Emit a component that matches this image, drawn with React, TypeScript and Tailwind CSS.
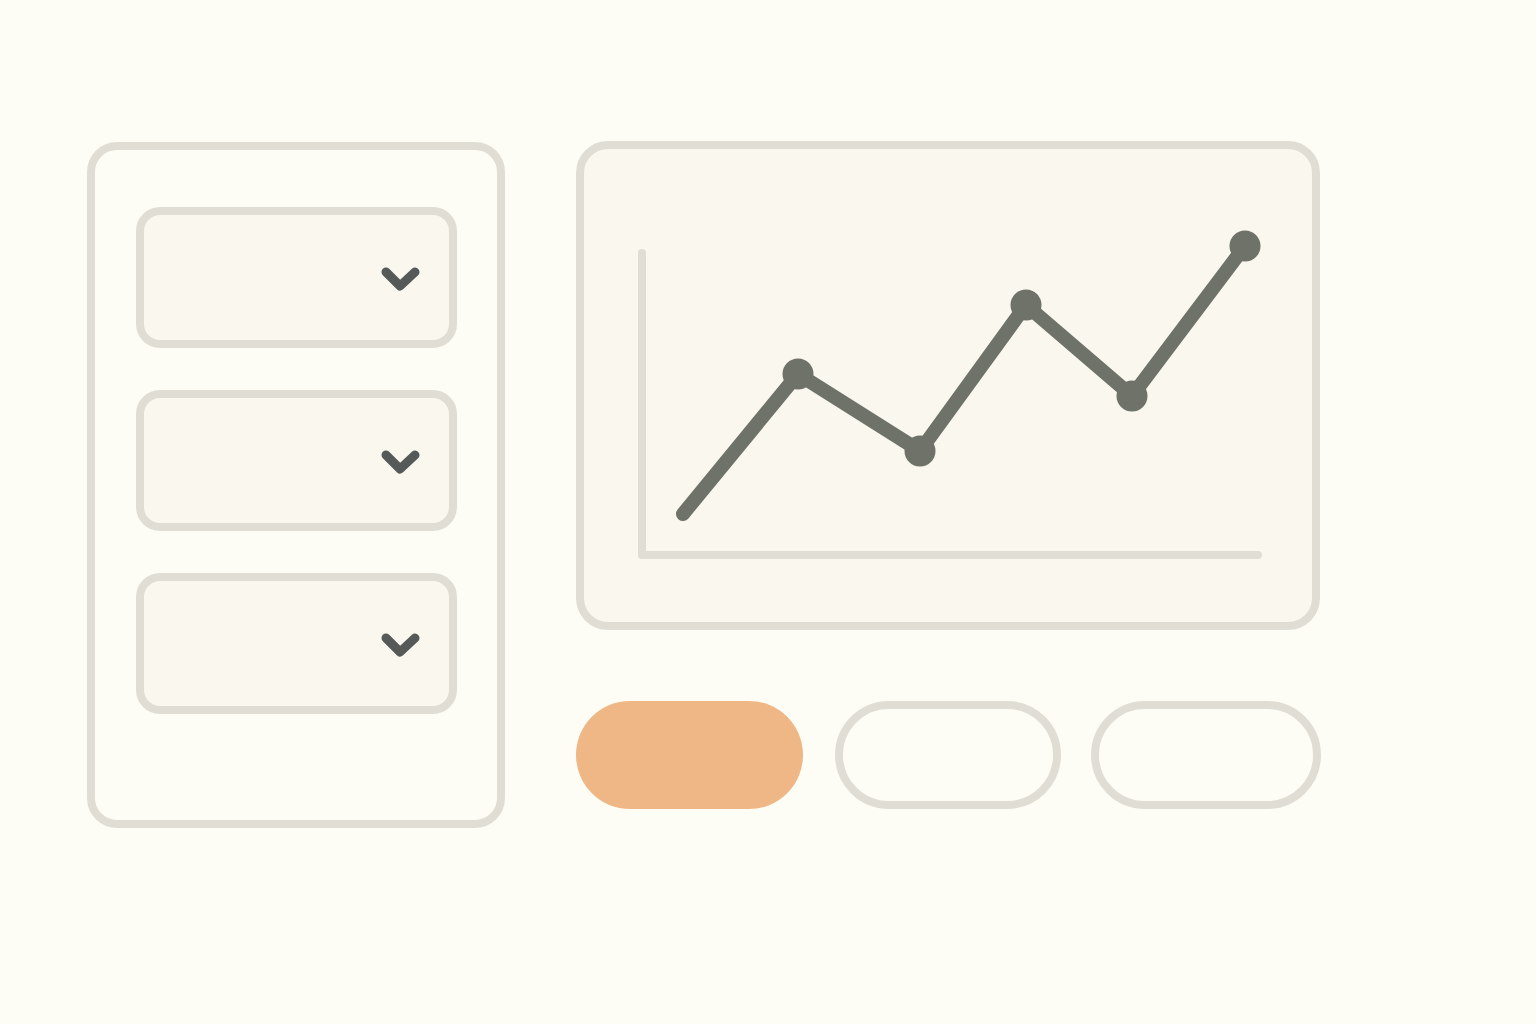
const Dropdown = () => (
  <div className="flex h-[141px] w-[321px] items-center justify-end rounded-[24px] border-[8px] border-[#e0ded4] bg-[#f9f7ee] pr-[28px]">
    <svg width="40" height="30" viewBox="0 0 40 30" fill="none" className="mt-[4px]">
      <path d="M5 7 L19 21 L34 7" stroke="#555a58" strokeWidth="9" strokeLinecap="round" strokeLinejoin="round" />
    </svg>
  </div>
);

const points: [number, number][] = [
  [100, 366],
  [215, 226],
  [337, 303],
  [443, 157],
  [549, 248],
  [662, 98],
];

const Chart = () => (
  <svg width="728" height="473" viewBox="1 1 728 473" fill="none">
    <path d="M59 105 L59 407 L675 407" stroke="#e0ded4" strokeWidth="8" strokeLinecap="round" strokeLinejoin="round" />
    <polyline
      points={points.map((p) => p.join(",")).join(" ")}
      stroke="#6f7268"
      strokeWidth="14"
      strokeLinecap="round"
      strokeLinejoin="round"
    />
    {points.slice(1).map(([x, y], i) => (
      <circle key={i} cx={x} cy={y} r={15.5} fill="#6f7268" />
    ))}
  </svg>
);

export default function App() {
  return (
    <div className="min-h-screen w-full bg-[#fefdf5] pl-[87px] pt-[141px]">
      <div className="flex items-start gap-[71px]">
        <div className="mt-[1px] flex h-[686px] w-[418px] flex-col gap-[42px] rounded-[30px] border-[8px] border-[#e0ded4] bg-[#fefdf5] pl-[41px] pt-[57px]">
          <Dropdown />
          <Dropdown />
          <Dropdown />
        </div>
        <div className="flex flex-col gap-[71px]">
          <div className="h-[489px] w-[744px] overflow-hidden rounded-[32px] border-[8px] border-[#e0ded4] bg-[#f9f7ee]">
            <Chart />
          </div>
          <div className="flex items-center">
            <button className="h-[108px] w-[227px] rounded-full bg-[#efb786]" />
            <button className="ml-[32px] h-[108px] w-[226px] rounded-full border-[8px] border-[#e0ded4] bg-[#fefdf5]" />
            <button className="ml-[30px] h-[108px] w-[230px] rounded-full border-[8px] border-[#e0ded4] bg-[#fefdf5]" />
          </div>
        </div>
      </div>
    </div>
  );
}
